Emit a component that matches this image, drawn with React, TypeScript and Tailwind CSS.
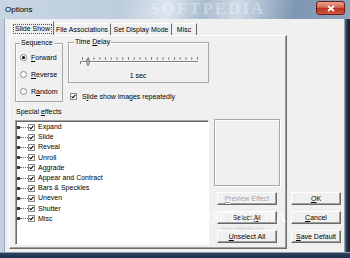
import type { ReactNode } from "react";

const effects = [
  "Expand",
  "Slide",
  "Reveal",
  "Unroll",
  "Aggrade",
  "Appear and Contract",
  "Bars & Speckles",
  "Uneven",
  "Shutter",
  "Misc",
];

function Check() {
  return (
    <span className="w-[7px] h-[7px] shrink-0 flex items-center justify-center bg-white border border-[#8a8a8a]">
      <svg viewBox="0 0 5 5" className="w-[5px] h-[5px]">
        <path d="M0.6 2.4 L1.9 3.8 L4.4 0.9" stroke="#000" strokeWidth="1.1" fill="none" />
      </svg>
    </span>
  );
}

function Radio({ on }: { on?: boolean }) {
  return (
    <span className="w-[7px] h-[7px] shrink-0 rounded-full bg-white border border-[#8a8a8a] flex items-center justify-center">
      {on && <span className="w-[3px] h-[3px] rounded-full bg-black" />}
    </span>
  );
}

function Btn({ children, disabled }: { children: ReactNode; disabled?: boolean }) {
  return (
    <div
      className={
        disabled
          ? "h-[13px] flex items-center justify-center bg-[#f0f0f0] border border-t-white border-l-white border-r-[#696969] border-b-[#696969] shadow-[inset_-1px_-1px_0_#a0a0a0] text-[#a0a0a0] [text-shadow:1px_1px_0_#fff]"
          : "h-[13px] flex items-center justify-center bg-[#f0f0f0] border border-t-white border-l-white border-r-[#696969] border-b-[#696969] shadow-[inset_-1px_-1px_0_#a0a0a0] text-black"
      }
    >
      {children}
    </div>
  );
}

export default function App() {
  return (
    <div className="w-[350px] h-[258px] flex flex-col font-['Liberation_Sans',Arial,sans-serif] text-[7px] leading-[8px] text-black overflow-hidden">
      {/* title bar */}
      <div className="relative h-[19px] flex items-center bg-[linear-gradient(100deg,#c8d6e4_0%,#bdcddd_35%,#dce5ee_48%,#a9bcd0_58%,#cfdae6_68%,#7e96b0_84%,#8fa5bd_100%)]">
        <span className="ml-[5px] text-[8px] leading-[9px]">Options</span>
        <span className="absolute left-[150px] top-0 text-[17px] leading-[18px] font-bold tracking-[2px] text-white/35 font-['Liberation_Serif',serif]">
          SOFTPEDIA
        </span>
        <div className="absolute left-[316px] top-[1px] w-[29px] h-[14px] rounded-[3px] border border-[#6b1c14] bg-[linear-gradient(180deg,#e8a393_0%,#d2664f_45%,#b8321f_55%,#cf5a3e_100%)] flex items-center justify-center">
          <svg viewBox="0 0 8 7" className="w-[8px] h-[7px]">
            <path d="M1 1 L7 6 M7 1 L1 6" stroke="#fff" strokeWidth="1.8" />
          </svg>
        </div>
      </div>

      <div className="flex flex-1">
        {/* left frame */}
        <div className="w-[5px] bg-[#c3d1df] border-r border-[#9aabbd]" />

        {/* client area */}
        <div className="relative flex-1 bg-[#f0f0f0] pl-[4px] pt-[2px] flex flex-col">
          {/* tabs */}
          <div className="h-[14px] ml-[2px] flex items-end">
            <div className="h-[14px] w-[43px] flex items-center justify-center border-l border-t border-r border-l-white border-t-white border-r-[#696969]">
              <span className="px-[1px] h-[10px] flex items-center border border-dotted border-[#555]">Slide Show</span>
            </div>
            <div className="h-[12px] w-[57px] flex items-center justify-center border-t border-r border-t-white border-r-[#696969]">
              File Associations
            </div>
            <div className="h-[12px] w-[61px] flex items-center justify-center border-t border-r border-t-white border-r-[#696969]">
              Set Display Mode
            </div>
            <div className="h-[12px] w-[25px] flex items-center justify-center border-t border-r border-t-white border-r-[#696969]">
              Misc
            </div>
          </div>

          <div className="flex">
            {/* tab panel */}
            <div className="w-[278px] h-[214px] border border-t-white border-l-white border-r-[#696969] border-b-[#696969] shadow-[inset_-1px_-1px_0_#a0a0a0] pl-[5px] flex flex-col">
              <div className="mt-[7px] flex items-start">
                {/* Sequence */}
                <div className="relative w-[48px] h-[59px] border border-[#a8a8a8] shadow-[inset_1px_1px_0_#fff] pl-[4px] pt-[10px] flex flex-col gap-[10px]">
                  <span className="absolute left-[4px] top-[-5px] px-[1px] bg-[#f0f0f0]">Sequence</span>
                  <div className="h-[7px] flex items-center gap-[4px]">
                    <Radio on />
                    <span>
                      <u>F</u>orward
                    </span>
                  </div>
                  <div className="h-[7px] flex items-center gap-[4px]">
                    <Radio />
                    <span>
                      <u>R</u>everse
                    </span>
                  </div>
                  <div className="h-[7px] flex items-center gap-[4px]">
                    <Radio />
                    <span>
                      R<u>a</u>ndom
                    </span>
                  </div>
                </div>

                <div className="ml-[5px] -mt-[1px] flex flex-col">
                  {/* Time Delay */}
                  <div className="relative w-[141px] h-[41px] border border-[#a8a8a8] shadow-[inset_1px_1px_0_#fff] pl-[10px] pt-[14px] flex flex-col">
                    <span className="absolute left-[5px] top-[-5px] px-[1px] bg-[#f0f0f0]">
                      Time <u>D</u>elay
                    </span>
                    <svg width="120" height="9" viewBox="0 0 120 9">
                      {Array.from({ length: 21 }, (_, i) => (
                        <rect key={i} x={3 + i * 5.75} y={0.5} width={1} height={2} fill="#555" />
                      ))}
                      <rect x="1" y="4" width="118" height="1" fill="#808080" />
                      <rect x="1" y="5" width="118" height="1" fill="#fff" />
                      <rect x="1" y="4" width="1" height="3" fill="#808080" />
                      <path d="M8 2 H10 V7 L9 8.5 L8 7 Z" fill="#f0f0f0" stroke="#404040" strokeWidth="0.8" />
                    </svg>
                    <div className="mt-[6px] w-[118px] text-center">1 sec</div>
                  </div>
                  <div className="mt-[10px] ml-[2px] h-[7px] flex items-center gap-[5px]">
                    <Check />
                    <span>
                      S<u>l</u>ide show images repeatedly
                    </span>
                  </div>
                </div>
              </div>

              <div className="mt-[6px] ml-[1px] h-[8px]">
                Special <u>e</u>ffects
              </div>

              <div className="mt-[4px] flex items-start">
                {/* tree list */}
                <div className="w-[194px] h-[125px] bg-white border border-t-[#a0a0a0] border-l-[#a0a0a0] border-r-white border-b-white shadow-[inset_1px_1px_0_#696969] pt-[1px] flex flex-col">
                  {effects.map((name) => (
                    <div key={name} className="h-[10.2px] flex items-center">
                      <span className="ml-[1px] w-[3px] h-[3px] bg-[#3a3a3a]" />
                      <span className="w-[8px] border-t border-dotted border-[#6a6a6a]" />
                      <Check />
                      <span className="ml-[3px]">{name}</span>
                    </div>
                  ))}
                </div>

                <div className="ml-[5px] -mt-[1px] flex flex-col">
                  <div className="w-[66px] h-[67px] border border-[#a8a8a8] shadow-[inset_1px_1px_0_#fff,1px_1px_0_#fff]" />
                  <div className="mt-[6px] ml-[3px] w-[60px] flex flex-col gap-[6px]">
                    <Btn disabled>
                      <span>
                        <u>P</u>review Effect
                      </span>
                    </Btn>
                    <Btn>
                      <span>
                        Select <u>A</u>ll
                      </span>
                    </Btn>
                    <Btn>
                      <span>
                        <u>U</u>nselect All
                      </span>
                    </Btn>
                  </div>
                </div>
              </div>
            </div>

            {/* right buttons */}
            <div className="ml-[4px] w-[50px] flex flex-col justify-end pb-[6px] gap-[6px]">
              <Btn>
                <span>
                  <u>O</u>K
                </span>
              </Btn>
              <Btn>
                <span>
                  <u>C</u>ancel
                </span>
              </Btn>
              <Btn>
                <span>
                  <u>S</u>ave Default
                </span>
              </Btn>
            </div>
          </div>

          {/* watermark */}
          <div className="absolute left-[193px] top-[192px] flex flex-col items-center pointer-events-none">
            <span className="text-[14px] leading-[14px] font-bold tracking-[1px] text-white/60 font-['Liberation_Serif',serif]">
              SOFTPEDIA
            </span>
            <span className="text-[5px] leading-[6px] text-[#cfcfcf]">www.softpedia.com</span>
          </div>
        </div>

        {/* right frame */}
        <div className="w-[6px] bg-[linear-gradient(90deg,#9aa4ae_0px,#9aa4ae_1px,#5d6c7e_1px,#2b3646_3px,#121a25_100%)]" />
      </div>

      {/* bottom frame */}
      <div className="h-[6px] bg-[linear-gradient(180deg,#8d9aa8_0px,#8d9aa8_1px,#2c4260_1px,#1d3150_100%)]" />
    </div>
  );
}
